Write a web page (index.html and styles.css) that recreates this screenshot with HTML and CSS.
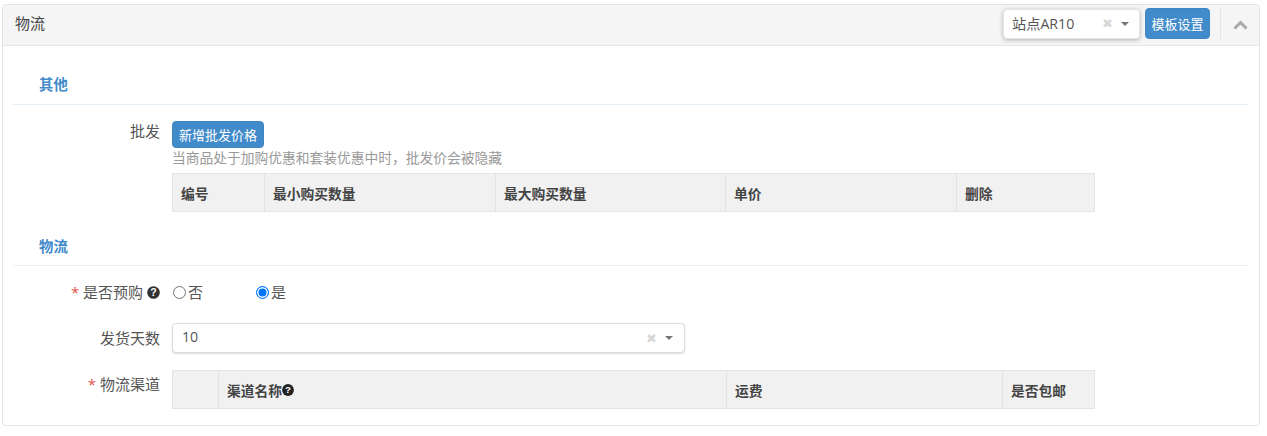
FILE: index.html
```html
<!DOCTYPE html>
<html lang="zh">
<head>
<meta charset="utf-8">
<title>物流</title>
<link rel="stylesheet" href="styles.css">
</head>
<body>
<section class="panel">
  <header class="panel-head">
    <span class="panel-title">物流</span>
    <div class="head-tools">
      <div class="select select-site">
        <span class="select-value">站点AR10</span>
        <span class="select-clear">✖</span>
        <span class="caret"></span>
      </div>
      <button class="btn btn-template">模板设置</button>
      <span class="head-divider"></span>
      <svg class="collapse" width="15" height="10" viewBox="0 0 15 10"><path d="M1.5 8.5 7.5 2.5l6 6" fill="none" stroke="#a9a9a9" stroke-width="3"/></svg>
    </div>
  </header>
  <div class="panel-body">
    <h3 class="section-title first">其他</h3>
    <div class="row row-wholesale">
      <label class="row-label">批发</label>
      <div class="row-content">
        <button class="btn btn-add">新增批发价格</button>
        <p class="hint">当商品处于加购优惠和套装优惠中时，批发价会被隐藏</p>
        <div class="table table-wholesale">
          <div class="cell">编号</div>
          <div class="cell">最小购买数量</div>
          <div class="cell">最大购买数量</div>
          <div class="cell">单价</div>
          <div class="cell">删除</div>
        </div>
      </div>
    </div>
    <h3 class="section-title second">物流</h3>
    <div class="row row-presale">
      <label class="row-label"><span class="req">*</span> 是否预购 <svg class="help" width="13" height="13" viewBox="0 0 13 13"><circle cx="6.5" cy="6.5" r="6.3" fill="#333"/><text x="6.5" y="10.2" text-anchor="middle" class="help-mark">?</text></svg></label>
      <div class="row-content radios">
        <label class="radio"><span class="dot"></span>否</label>
        <label class="radio"><span class="dot on"></span>是</label>
      </div>
    </div>
    <div class="row row-days">
      <label class="row-label">发货天数</label>
      <div class="row-content">
        <div class="select select-days">
          <span class="select-value">10</span>
          <span class="select-clear">✖</span>
          <span class="caret"></span>
        </div>
      </div>
    </div>
    <div class="row row-channel">
      <label class="row-label"><span class="req">*</span> 物流渠道</label>
      <div class="row-content">
        <div class="table table-channel">
          <div class="cell"></div>
          <div class="cell">渠道名称<svg class="help" width="12" height="12" viewBox="0 0 13 13"><circle cx="6.5" cy="6.5" r="6.4" fill="#222"/><text x="6.5" y="10.2" text-anchor="middle" class="help-mark">?</text></svg></div>
          <div class="cell">运费</div>
          <div class="cell">是否包邮</div>
        </div>
      </div>
    </div>
  </div>
</section>
</body>
</html>
```

FILE: styles.css
```css
* { box-sizing: border-box; }
html, body { margin: 0; background: #fff; }
body {
  padding: 4px 7px 0 2px;
  font-family: "Open Sans", "Noto Sans CJK SC", sans-serif;
  font-size: 13.75px;
  color: #555;
}
.panel {
  height: 422px;
  border: 1px solid #e4e4e4;
  border-radius: 4px;
  overflow: hidden;
}
.panel-head {
  height: 41px;
  background: #f5f5f5;
  border-bottom: 1px solid #e6e6e6;
  display: flex;
  align-items: center;
  justify-content: space-between;
  padding-left: 12px;
}
.panel-title { font-size: 15px; color: #444; line-height: 38px; margin-top: -5px; }
.head-tools { display: flex; align-items: center; height: 100%; }
.select {
  display: flex;
  align-items: center;
  background: #fff;
  border-radius: 4px;
  border: 1px solid #dcdcdc;
}
.select-value { flex: 1; color: #555; }
.select-clear { color: #d8d8d8; font-size: 13px; line-height: 1; margin-right: -1px; }
.caret {
  width: 0; height: 0;
  border-left: 4.5px solid transparent;
  border-right: 4.5px solid transparent;
  border-top: 4.5px solid #777;
  margin-left: 9px;
}
.select-site {
  width: 137px;
  height: 30px;
  padding: 0 10px 0 8px;
  font-size: 14.2px;
  border-color: #e6e6e6;
  margin-top: -3px;
  box-shadow: 0 1px 4px rgba(0,0,0,.28);
}
.select-site .select-value { margin-top: -2px; }
.btn {
  font: inherit;
  font-size: 13px;
  color: #fff;
  background: #428bca;
  border: 1px solid #3f86c3;
  border-radius: 4px;
  padding: 0;
}
.btn-template { width: 65px; height: 31px; margin: -3px 0 0 5px; }
.head-divider { width: 1px; height: 32px; background: #e4e4e4; margin: -4px 0 0 10px; }
.collapse { margin: 0 11px 0 12px; }
.panel-body { padding: 0 10px; }
.section-title {
  margin: 0;
  padding-left: 26px;
  font-size: 14.4px;
  font-weight: 700;
  color: #428bca;
  border-bottom: 1px solid #e3edf5;
}
.section-title.first { margin-top: 27px; height: 32px; line-height: 24px; }
.section-title.second { margin-top: 22px; border-bottom-color: #eee; height: 32px; line-height: 26px; }
.row { display: flex; }
.row-label {
  width: 147px;
  flex: none;
  text-align: right;
  font-size: 15px;
  color: #555;
  line-height: 22px;
}
.row-content { margin-left: 12px; }
.row-wholesale { margin-top: 16px; }
.row-wholesale .row-label { line-height: 20px; }
.btn-add { display: block; width: 92px; height: 27px; }
.hint { margin: 0; height: 25px; line-height: 20px; color: #999; }
.table {
  display: grid;
  height: 39px;
  background: #f1f1f1;
  border: 1px solid #e5e5e5;
  border-width: 1px 1px 1px 0;
  font-weight: 700;
  color: #444;
}
.cell {
  display: flex;
  align-items: center;
  padding-left: 8px;
  border-left: 1px solid #e2e2e2;
  min-width: 0;
}
.table-wholesale { width: 923px; grid-template-columns: 92px 231px 230px 231px 1fr; }
.table-channel { width: 923px; grid-template-columns: 46px 508px 276px 1fr; }
.req { color: #e0554a; }
.help { vertical-align: -1px; }
.help-mark { font: 700 10.5px "Liberation Sans", sans-serif; fill: #fff; }
.row-presale { margin-top: 15px; }
.radios { display: flex; font-size: 15px; line-height: 22px; margin-left: 13px; }
.radio { display: flex; align-items: center; width: 83px; color: #555; }
.dot {
  width: 13px; height: 13px;
  border: 1px solid #767676;
  border-radius: 50%;
  margin-right: 2px;
  background: #fff;
}
.dot.on { border: 1.5px solid #0075ff; box-shadow: inset 0 0 0 1.5px #fff; background: #0075ff; }
.row-days { margin-top: 20px; }
.row-days .row-label { line-height: 30px; }
.select-days {
  width: 513px;
  height: 30px;
  padding: 0 11px 0 9px;
  border-color: #dcdcdc;
  font-size: 14.2px;
  box-shadow: 0 1px 2px rgba(0,0,0,.14);
}
.select-days .select-value { margin-top: -3px; }
.row-channel { margin-top: 17px; }
.row-channel .row-label { line-height: 28px; }
```
